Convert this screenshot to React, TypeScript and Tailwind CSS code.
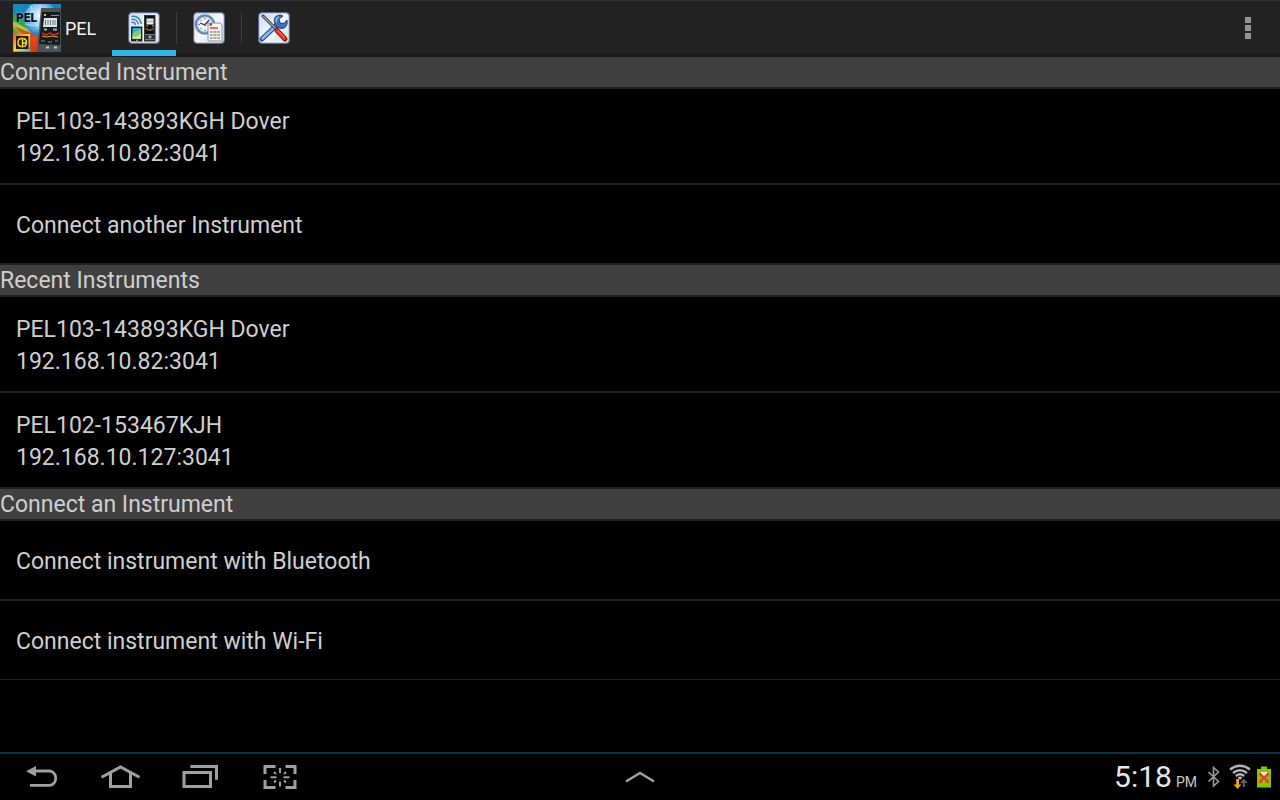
import React from 'react';

const sections = [
  {
    title: 'Connected Instrument',
    items: [
      { lines: ['PEL103-143893KGH Dover', '192.168.10.82:3041'] },
      { lines: ['Connect another Instrument'] },
    ],
  },
  {
    title: 'Recent Instruments',
    items: [
      { lines: ['PEL103-143893KGH Dover', '192.168.10.82:3041'] },
      { lines: ['PEL102-153467KJH', '192.168.10.127:3041'] },
    ],
  },
  {
    title: 'Connect an Instrument',
    items: [
      { lines: ['Connect instrument with Bluetooth'] },
      { lines: ['Connect instrument with Wi-Fi'] },
    ],
  },
];

export default function App() {
  return (
    <div className="min-h-screen flex flex-col bg-black text-[#cfcfcf] font-[Roboto,sans-serif]">
      <header className="flex items-stretch h-[57px] bg-[#222222] border-t border-[#333333] border-b-3 border-b-[#1a1a1a]">
        <div className="flex items-center gap-1 pl-[13px] w-28 shrink-0">
          <AppLogo />
          <h1 className="text-lg pt-0.5 text-[#f3f3f3]">PEL</h1>
        </div>
        <nav className="flex items-start">
          <Tab label="Instruments" icon={InstrumentIcon} active />
          <TabDivider />
          <Tab label="Recording" icon={ScheduleIcon} />
          <TabDivider />
          <Tab label="Tools" icon={ToolsIcon} />
        </nav>
        <button aria-label="More options" className="ml-auto w-16 flex flex-col items-center justify-center gap-0.5">
          <span className="size-1.5 bg-[#939393]" />
          <span className="size-1.5 bg-[#939393]" />
          <span className="size-1.5 bg-[#939393]" />
        </button>
      </header>

      <main className="flex-1 text-[23px]">
        {sections.map((section) => (
          <section key={section.title} className="group">
            <h2 className="pt-0.5 leading-7 bg-[#404040] border-b-2 border-[#212121]">{section.title}</h2>
            <ul>
              {section.items.map((item) => (
                <ListRow key={item.lines[0]} lines={item.lines} />
              ))}
            </ul>
          </section>
        ))}
      </main>

      <footer className="grid grid-cols-[1fr_auto_1fr] h-12 border-t-2 border-[#0a3243] text-[#a0a0a0]">
        <div className="flex pl-0.5">
          <NavButton label="Back" icon={BackIcon} />
          <NavButton label="Home" icon={HomeIcon} />
          <NavButton label="Recent apps" icon={RecentIcon} />
          <NavButton label="Screenshot" icon={CaptureIcon} />
        </div>
        <NavButton label="Mini apps" icon={ChevronIcon} />
        <div className="flex items-center justify-end pr-[9px]">
          <div className="flex items-baseline gap-1 text-[#e6e6e6]">
            <span className="text-[30px] leading-8">5:18</span>
            <span className="text-sm text-[#c8c8c8]">PM</span>
          </div>
          <BluetoothIcon />
          <WifiIcon />
          <BatteryIcon />
        </div>
      </footer>
    </div>
  );
}

const ListRow = ({ lines }: { lines: string[] }) => (
  <li className="border-b-2 border-[#212121] group-last:last:border-b">
    <button className={lines.length > 1 ? 'block w-full px-4 pt-[17px] pb-[13px] text-left' : 'block w-full px-4 pt-[25px] pb-[21px] text-left'}>
      {lines.map((line) => (
        <span key={line} className="block leading-8">{line}</span>
      ))}
    </button>
  </li>
);

const Tab = ({ label, icon: Icon, active }: any) => (
  <button
    aria-label={label}
    className={`w-16 h-[55px] pt-[11px] flex justify-center items-start border-b-6 ${active ? 'border-[#33b5e5]' : 'border-transparent'}`}
  >
    <Icon />
  </button>
);

const TabDivider = () => <span className="w-px h-8 mt-[11px] bg-[#3d3d3d]" />;

const NavButton = ({ label, icon: Icon }: any) => (
  <button aria-label={label} className="w-[79px] flex items-center justify-center">
    <Icon />
  </button>
);

const AppLogo = () => (
  <svg width="48" height="48" viewBox="0 0 48 48" aria-hidden="true">
    <defs>
      <linearGradient id="rainbow" x1="0" y1="0.2" x2="0.8" y2="1">
        <stop offset="0" stopColor="#1aa6a4" />
        <stop offset="0.2" stopColor="#27a344" />
        <stop offset="0.45" stopColor="#9cc832" />
        <stop offset="0.65" stopColor="#e8761c" />
        <stop offset="1" stopColor="#a01810" />
      </linearGradient>
      <radialGradient id="globe" cx="0.45" cy="0.4" r="0.6">
        <stop offset="0" stopColor="#eefaff" />
        <stop offset="0.5" stopColor="#8cc9ee" />
        <stop offset="1" stopColor="#1b74bd" />
      </radialGradient>
      <linearGradient id="badge" x1="0" y1="0" x2="1" y2="1">
        <stop offset="0" stopColor="#ff4a2a" />
        <stop offset="0.5" stopColor="#ffd43a" />
        <stop offset="1" stopColor="#38b6e8" />
      </linearGradient>
    </defs>
    <rect width="48" height="48" fill="url(#rainbow)" />
    <path d="M0 0H48V20L26 32L12 19L0 9Z" fill="#1787bd" />
    <path d="M0 11L28 28L20 34L0 18Z" fill="#2fa548" />
    <path d="M0 17L26 31L22 38L0 24Z" fill="#d8d83a" opacity="0.7" />
    <path d="M0 22L26 32L26 48H18L14 34Z" fill="#d9331b" opacity="0.8" />
    <circle cx="28" cy="15" r="17" fill="url(#globe)" />
    <path d="M12 10Q26 16 44 6M12 20Q26 25 43 14M18 1Q20 18 31 32M27 0Q27 16 36 30" fill="none" stroke="#e4f6ff" strokeWidth="0.8" opacity="0.7" />
    <path d="M28 4H48V48H24Z" fill="#4b535a" />
    <path d="M29 8H47V41L26 40Z" fill="#171a1f" />
    <rect x="31" y="10" width="2" height="2" fill="#e8c82a" />
    <path d="M38 11.5H46" stroke="#8a9096" />
    <path d="M31 14H44V23H30Z" fill="#dce3e6" />
    <path d="M32.500 16V21M35 16V21M37.500 16V21M40 16V21M42 16V21" stroke="#6c7880" />
    <path d="M31 25.500H34M40 25.500H44" stroke="#a5adb2" strokeWidth="2" />
    <path d="M29 29L33 31L37 29L41 31L46 29" fill="none" stroke="#c43a1c" strokeWidth="1.500" />
    <path d="M29 32L34 33L39 32L45 33" fill="none" stroke="#d8aa2c" />
    <path d="M28 37H32M35 38H39M42 37H45" stroke="#596168" strokeWidth="1.500" />
    <path d="M33 43.500H36M41 43.500H44" stroke="#b7d1ca" strokeWidth="2" />
    <rect x="1" y="30" width="16" height="17" fill="url(#badge)" />
    <rect x="3" y="32" width="12.500" height="13" fill="#211d0c" />
    <path d="M8.500 34.500Q5 34.500 5 38.500T8.500 42.500M10.500 34.500Q13.500 35 13.500 38.500T10.500 42.500M9.500 33.500V43.500M9.500 39H13" fill="none" stroke="#ffd92e" strokeWidth="1.400" />
    <text x="3" y="18" fontFamily="Roboto, sans-serif" fontWeight="900" fontSize="12" fill="#0a1015" stroke="#a5dcf0" strokeOpacity="0.5" strokeWidth="1.200" paintOrder="stroke">PEL</text>
  </svg>
);

const IconPlate = ({ children }: { children: React.ReactNode }) => (
  <svg width="32" height="32" viewBox="0 0 32 32" aria-hidden="true">
    <defs>
      <linearGradient id="plate" x1="0" y1="0" x2="1" y2="1">
        <stop offset="0" stopColor="#c9d9e8" />
        <stop offset="0.5" stopColor="#f4f8fa" />
        <stop offset="1" stopColor="#d3dee6" />
      </linearGradient>
    </defs>
    <rect x="0.800" y="0.800" width="30.400" height="30.400" rx="3" fill="url(#plate)" stroke="#5b6c8e" strokeWidth="1.400" />
    <rect x="1.900" y="1.900" width="28.200" height="28.200" rx="2" fill="none" stroke="#f4f7fa" strokeWidth="0.800" />
    {children}
  </svg>
);

const InstrumentIcon = () => (
  <IconPlate>
    <path d="M3.500 4.500Q11 3 13.500 12M3.500 7.500Q9 6.500 10.500 12.500M3.500 10.500Q7 9.500 7.500 13" fill="none" stroke="#3b7fb8" strokeWidth="1.400" />
    <rect x="3" y="14.500" width="11.500" height="15" fill="#16242c" />
    <path d="M4.500 16H13V27H4.500Z" fill="#35a9d6" />
    <path d="M4.500 21Q9 19 13 17V27H4.500Z" fill="#7cc98a" />
    <path d="M4.500 24Q9 26 13 21V27H4.500Z" fill="#d5e07a" />
    <path d="M8 28.300H10" stroke="#a3b7bd" />
    <rect x="16" y="3" width="11.500" height="26.500" fill="#373737" />
    <rect x="17" y="4" width="9.500" height="18" fill="#111111" />
    <rect x="18.500" y="6.500" width="7" height="6" fill="#f2f3f4" />
    <path d="M20 8V11M22 8V11M24 8V11" stroke="#8b9298" strokeWidth="0.800" />
    <path d="M18.500 14H20M24 14H26" stroke="#bcbcbc" />
    <path d="M17.500 16.500L20 18H23L26 16.500" fill="none" stroke="#d48b20" />
    <path d="M17 22.500H27M17 27.500H27" stroke="#74797c" />
    <circle cx="22" cy="25" r="1.400" fill="#b2b2b2" />
    <path d="M15.300 3V29" stroke="#f7f7f7" />
  </IconPlate>
);

const ScheduleIcon = () => (
  <IconPlate>
    <circle cx="12" cy="12.500" r="9" fill="#edf3f8" stroke="#6485b5" strokeWidth="2.400" />
    <circle cx="12" cy="12.500" r="7.500" fill="none" stroke="#aec2da" />
    <path d="M12 6V7.500M12 17.500V19M5.500 12.500H7M17 12.500H18.500M7.500 8L8.500 9M16.500 8L15.500 9M7.500 17L8.500 16" stroke="#49617f" />
    <path d="M7 11L12 13L16 8" fill="none" stroke="#263b60" strokeWidth="1.300" />
    <circle cx="12" cy="12.800" r="1.200" fill="#bd3b36" />
    <path d="M15 11H27L29 13V29H15Z" fill="#f3f3f3" stroke="#777e86" strokeWidth="0.800" />
    <path d="M16.500 12.500H19" stroke="#766118" strokeWidth="2.500" />
    <path d="M17 16H25" stroke="#e1605a" strokeWidth="1.700" />
    <path d="M17 20H27M17 23H27M17 26H27" stroke="#a8a8a8" strokeWidth="2" />
    <path d="M20 18V28M24 18V28" stroke="#f3f3f3" strokeWidth="0.800" />
  </IconPlate>
);

const ToolsIcon = () => (
  <IconPlate>
    <path d="M4 27L20 12" stroke="#284f9a" strokeWidth="5" strokeLinecap="round" />
    <path d="M4.500 26.500L20 12" stroke="#8fb9e8" strokeWidth="2.500" strokeLinecap="round" />
    <path d="M17 12Q14.500 5 20 3.500Q23 2.500 25 4L21 7L22 11L26 11.500L29 8Q30 14 26 16Q23 17.500 19 15Z" fill="#3f72ba" stroke="#213f7a" />
    <path d="M18 10Q18 6 21 5" fill="none" stroke="#a9cdf1" strokeWidth="1.300" />
    <path d="M5 4L18 17" stroke="#282c36" strokeWidth="3" strokeLinecap="round" />
    <path d="M5 4L18 17" stroke="#a8aeb8" strokeWidth="1.200" />
    <path d="M19 18.500L27 27" stroke="#8c1713" strokeWidth="5" strokeLinecap="round" />
    <path d="M19 18.500L26.500 26.500" stroke="#e53e2d" strokeWidth="3" strokeLinecap="round" />
    <path d="M20 18.500L26 25" stroke="#ff9b8a" strokeWidth="0.800" />
  </IconPlate>
);

const BackIcon = () => (
  <svg width="36" height="26" viewBox="0 0 36 26" fill="none" stroke="currentColor" strokeWidth="2.800">
    <path d="M11 7H25.500A6.200 7.100 0 0 1 25.500 21.300H6" />
    <path d="M2 7.200L12 2V12.500Z" fill="currentColor" stroke="none" />
  </svg>
);

const HomeIcon = () => (
  <svg width="42" height="26" viewBox="0 0 42 26" fill="none" stroke="currentColor" strokeWidth="3">
    <path d="M1.500 13.300L20.500 3L39.500 13.300" />
    <path d="M10.500 9V22.500H30.500V9" />
  </svg>
);

const RecentIcon = () => (
  <svg width="38" height="26" viewBox="-1 0 38 26" fill="none" stroke="currentColor" strokeWidth="3">
    <path d="M2 8.500H28.500V22.500H2Z" />
    <path d="M8.500 2.500H34.500V15.700" />
  </svg>
);

const CaptureIcon = () => (
  <svg width="36" height="26" viewBox="0 0 36 26" fill="none" stroke="currentColor" strokeWidth="3">
    <path d="M4 10V2.500H14.500M24.500 2.500H34V10M34 16V23.500H24.500M14.500 23.500H4V16" />
    <path d="M19 4V9M19 17.500V22.500M9.500 13.200H15.500M22.500 13.200H28.500M13 8L15 10M25 8L23 10M13 18.500L15 16.500M25 18.500L23 16.500" strokeWidth="2" />
  </svg>
);

const ChevronIcon = () => (
  <svg width="32" height="14" viewBox="0 0 32 14" fill="none" stroke="currentColor" strokeWidth="2.500">
    <path d="M2 11.500L16 3L30 11.500" />
  </svg>
);

const BluetoothIcon = () => (
  <svg className="ml-2.5" width="14" height="22" viewBox="0 0 14 22" fill="none" stroke="#9a9a9a" strokeWidth="1.600" role="img" aria-label="Bluetooth on">
    <path d="M1.500 6L11.500 15.500L6.500 20V1.500L11.500 6L1.500 15.500" />
  </svg>
);

const WifiIcon = () => (
  <svg className="ml-2" width="22" height="26" viewBox="0 0 22 26" fill="none" stroke="#b4b4b4" role="img" aria-label="Wi-Fi connected">
    <path d="M1 5.500Q11 -2 21 5.500M4 9Q11 3.500 18 9M6.800 12Q11 8.500 15.200 12" strokeWidth="2.300" />
    <path d="M8.500 13.500Q11 11.500 13.500 13.500L11 16Z" fill="#b4b4b4" stroke="none" />
    <path d="M7.200 15H10V20.500H12.500L8.600 25L4.500 20.500H7.200Z" fill="#f9a11f" stroke="none" />
    <path d="M14.800 23V16.500M12 19L14.800 16L17.600 19" stroke="#686868" strokeWidth="1.800" />
  </svg>
);

const BatteryIcon = () => (
  <svg className="ml-1.5" width="14" height="22" viewBox="0 0 14 22" role="img" aria-label="Battery not charging">
    <path d="M4 0.500H10V3H14V21.500H0V3H4Z" fill="#86c400" />
    <path d="M4 6H10L9 15H5Z" fill="#f4eedc" />
    <path d="M2.500 7.500L11.500 16.500M11.500 7.500L2.500 16.500" stroke="#f0401c" strokeWidth="2.600" />
  </svg>
);
